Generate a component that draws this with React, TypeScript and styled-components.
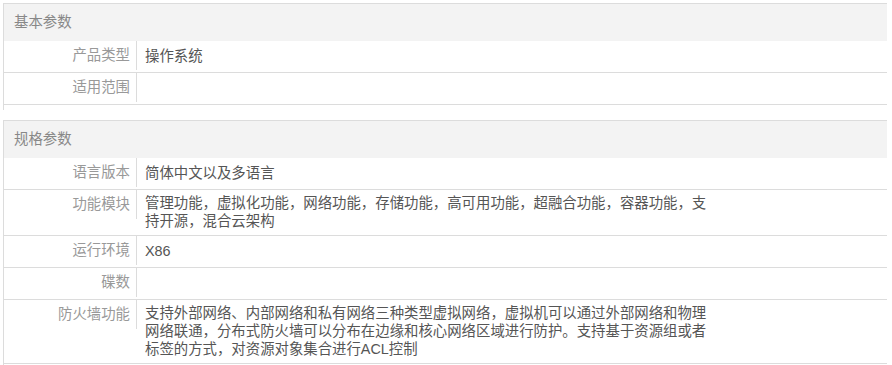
import styled, { createGlobalStyle } from "styled-components";

type Spec = { label: string; value?: string };

const basic: Spec[] = [
  { label: "产品类型", value: "操作系统" },
  { label: "适用范围" },
];

const specs: Spec[] = [
  { label: "语言版本", value: "简体中文以及多语言" },
  {
    label: "功能模块",
    value:
      "管理功能，虚拟化功能，网络功能，存储功能，高可用功能，超融合功能，容器功能，支持开源，混合云架构",
  },
  { label: "运行环境", value: "X86" },
  { label: "碟数" },
  {
    label: "防火墙功能",
    value:
      "支持外部网络、内部网络和私有网络三种类型虚拟网络，虚拟机可以通过外部网络和物理网络联通，分布式防火墙可以分布在边缘和核心网络区域进行防护。支持基于资源组或者标签的方式，对资源对象集合进行ACL控制",
  },
];

const ParamGroup = ({ title, items }: { title: string; items: Spec[] }) => (
  <Group>
    <GroupTitle>{title}</GroupTitle>
    {items.map((item) => (
      <Row key={item.label}>
        <Label>{item.label}</Label>
        <Value>{item.value}</Value>
      </Row>
    ))}
  </Group>
);

export default function App() {
  return (
    <>
      <GlobalStyle />
      <Page>
        <ParamGroup title="基本参数" items={basic} />
        <ParamGroup title="规格参数" items={specs} />
      </Page>
    </>
  );
}

const GlobalStyle = createGlobalStyle`
  body {
    margin: 0;
    background: #fff;
    font-family: "Liberation Sans", "Noto Sans CJK SC", sans-serif;
    font-size: 14.4px;
  }
`;

const Page = styled.div`
  padding: 3px 0 0 3px;
  width: 884px;
`;

const Group = styled.dl`
  margin: 0 0 10px;
  border-top: 1px solid #dcdcdc;
  border-left: 1px solid #dcdcdc;
  padding-bottom: 5px;
`;

const GroupTitle = styled.dt`
  height: 37px;
  line-height: 37px;
  padding-left: 10px;
  background: #f3f3f3;
  color: #888;
`;

const Row = styled.div`
  display: flex;
  min-height: 31px;
  border-bottom: 1px solid #dcdcdc;
`;

const Label = styled.div`
  flex-shrink: 0;
  box-sizing: border-box;
  width: 133px;
  height: 29px;
  line-height: 29px;
  padding-right: 6px;
  text-align: right;
  border-right: 1px solid #dcdcdc;
  color: #999;
`;

const Value = styled.dd`
  align-self: center;
  margin: 0;
  padding: 4px 8px 5px;
  max-width: 566px;
  line-height: 18px;
  color: #555;
`;
